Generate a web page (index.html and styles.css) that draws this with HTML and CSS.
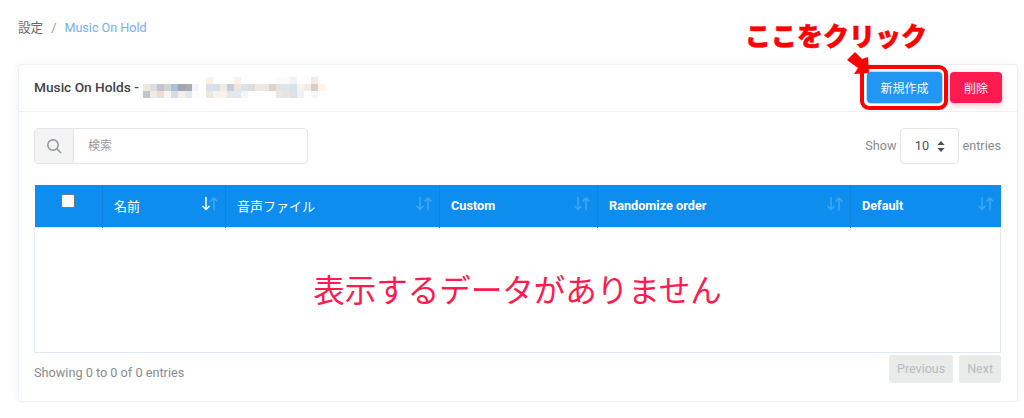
FILE: index.html
```html
<!DOCTYPE html>
<html lang="ja">
<head>
    <meta charset="UTF-8">
    <title>Music On Hold</title>
    <link rel="stylesheet" href="styles.css">
</head>
<body>

    <div class="breadcrumb">
        <span>設定</span>
        <span class="crumb-sep">/</span>
        <a class="crumb-link">Music On Hold</a>
    </div>

    <div class="card">
        <div class="card-header">
            <div class="card-title">
                Music On Holds -
                <!-- pixelated account name -->
                <svg class="blur-name" width="189" height="21" viewBox="0 0 189 21" shape-rendering="crispEdges">
                    <rect x="63" y="0" width="7" height="7" fill="#fdf0e6"/>
                    <rect x="91" y="0" width="7" height="7" fill="#fdf0e6"/>
                    <rect x="133" y="0" width="14" height="7" fill="#f8fbfd"/>
                    <rect x="147" y="0" width="7" height="7" fill="#f2f3f6"/>
                    <rect x="168" y="0" width="7" height="7" fill="#fae9e0"/>

                    <rect x="0" y="7" width="7" height="7" fill="#efe9dc"/>
                    <rect x="7" y="7" width="7" height="7" fill="#dddddf"/>
                    <rect x="14" y="7" width="7" height="7" fill="#c4c3cf"/>
                    <rect x="21" y="7" width="7" height="7" fill="#ccd6d0"/>
                    <rect x="28" y="7" width="7" height="7" fill="#a9c0da"/>
                    <rect x="35" y="7" width="7" height="7" fill="#a2a4ae"/>
                    <rect x="42" y="7" width="7" height="7" fill="#a9acb4"/>
                    <rect x="49" y="7" width="7" height="7" fill="#f3f7fc"/>
                    <rect x="63" y="7" width="7" height="7" fill="#d9e0ee"/>
                    <rect x="70" y="7" width="7" height="7" fill="#d8dde9"/>
                    <rect x="77" y="7" width="7" height="7" fill="#efece6"/>
                    <rect x="84" y="7" width="7" height="7" fill="#c9ccdc"/>
                    <rect x="91" y="7" width="7" height="7" fill="#efe5de"/>
                    <rect x="98" y="7" width="7" height="7" fill="#d6e4ef"/>
                    <rect x="105" y="7" width="7" height="7" fill="#e0dcdb"/>
                    <rect x="112" y="7" width="7" height="7" fill="#ece8e4"/>
                    <rect x="119" y="7" width="7" height="7" fill="#ece8e0"/>
                    <rect x="126" y="7" width="7" height="7" fill="#dcd3cc"/>
                    <rect x="133" y="7" width="7" height="7" fill="#e6e2e2"/>
                    <rect x="140" y="7" width="7" height="7" fill="#e4e4e6"/>
                    <rect x="147" y="7" width="7" height="7" fill="#d4e2ea"/>
                    <rect x="154" y="7" width="7" height="7" fill="#f8f2ee"/>
                    <rect x="161" y="7" width="7" height="7" fill="#f0ebe8"/>
                    <rect x="168" y="7" width="7" height="7" fill="#d9cfca"/>
                    <rect x="175" y="7" width="7" height="7" fill="#fbf3ec"/>

                    <rect x="0" y="14" width="7" height="7" fill="#c2c4c8"/>
                    <rect x="7" y="14" width="7" height="7" fill="#efece8"/>
                    <rect x="14" y="14" width="7" height="7" fill="#ecdcd4"/>
                    <rect x="21" y="14" width="7" height="7" fill="#f7f5f3"/>
                    <rect x="28" y="14" width="7" height="7" fill="#d8dbe4"/>
                    <rect x="35" y="14" width="7" height="7" fill="#f3f0eb"/>
                    <rect x="42" y="14" width="7" height="7" fill="#dfe9ef"/>
                    <rect x="49" y="14" width="7" height="7" fill="#fcfcfd"/>
                    <rect x="63" y="14" width="7" height="7" fill="#ece6e0"/>
                    <rect x="70" y="14" width="14" height="7" fill="#f7f2ea"/>
                    <rect x="84" y="14" width="14" height="7" fill="#e3e7f0"/>
                    <rect x="98" y="14" width="7" height="7" fill="#f3f7fd"/>
                    <rect x="133" y="14" width="7" height="7" fill="#ece6e4"/>
                    <rect x="140" y="14" width="7" height="7" fill="#e8e4e4"/>
                    <rect x="147" y="14" width="7" height="7" fill="#dfe0e4"/>
                    <rect x="154" y="14" width="7" height="7" fill="#f0f1f6"/>
                    <rect x="168" y="14" width="7" height="7" fill="#f5f9fc"/>
                </svg>
            </div>
            <div class="card-actions">
                <button class="btn btn-blue">新規作成</button>
                <button class="btn btn-red">削除</button>
            </div>
        </div>

        <div class="card-body">
            <div class="toolbar">
                <div class="search">
                    <span class="search-icon">
                        <svg width="16" height="16" viewBox="0 0 16 16" fill="none" stroke="#8a8f94" stroke-width="1.4">
                            <circle cx="7" cy="7" r="5.2"/>
                            <path d="M11 11l4 4"/>
                        </svg>
                    </span>
                    <span class="search-input">検索</span>
                </div>
                <div class="length">
                    Show
                    <span class="length-select">
                        10
                        <svg width="8" height="11" viewBox="0 0 8 11" fill="#495057">
                            <path d="M4 0l3.6 4H.4zM4 11L.4 7h7.2z"/>
                        </svg>
                    </span>
                    entries
                </div>
            </div>

            <table class="data-table">
                <thead>
                    <tr>
                        <th class="col-check"><span class="checkbox"></span></th>
                        <th class="col-name jp">名前
                            <svg class="sort" width="16" height="14" viewBox="0 0 16 14"><path class="on" d="M4 0V12.500M.5 9L4 12.500L7.500 9"/><path d="M12 13.500V1M8.500 4.500L12 1L15.500 4.500"/></svg>
                        </th>
                        <th class="col-file jp">音声ファイル
                            <svg class="sort" width="16" height="14" viewBox="0 0 16 14"><path d="M4 0V12.500M.5 9L4 12.500L7.500 9"/><path d="M12 13.500V1M8.500 4.500L12 1L15.500 4.500"/></svg>
                        </th>
                        <th class="col-custom">Custom
                            <svg class="sort" width="16" height="14" viewBox="0 0 16 14"><path d="M4 0V12.500M.5 9L4 12.500L7.500 9"/><path d="M12 13.500V1M8.500 4.500L12 1L15.500 4.500"/></svg>
                        </th>
                        <th class="col-random">Randomize order
                            <svg class="sort" width="16" height="14" viewBox="0 0 16 14"><path d="M4 0V12.500M.5 9L4 12.500L7.500 9"/><path d="M12 13.500V1M8.500 4.500L12 1L15.500 4.500"/></svg>
                        </th>
                        <th class="col-default">Default
                            <svg class="sort" width="16" height="14" viewBox="0 0 16 14"><path d="M4 0V12.500M.5 9L4 12.500L7.500 9"/><path d="M12 13.500V1M8.500 4.500L12 1L15.500 4.500"/></svg>
                        </th>
                    </tr>
                </thead>
                <tbody>
                    <tr>
                        <td colspan="6" class="empty">表示するデータがありません</td>
                    </tr>
                </tbody>
            </table>

            <div class="table-footer">
                <span class="info">Showing 0 to 0 of 0 entries</span>
                <div class="pager">
                    <span class="page-btn">Previous</span>
                    <span class="page-btn">Next</span>
                </div>
            </div>
        </div>
    </div>

    <!-- annotation drawn over the screenshot -->
    <div class="note-text">ここをクリック</div>
    <div class="note-box"></div>
    <svg class="note-arrow" width="24" height="24" viewBox="0 0 24 24">
        <path d="M1 9L9 1L16 8L22 6L23 22L8 23L12 17z" fill="#f00"/>
    </svg>

</body>
</html>
```

FILE: styles.css
```css
body {
    margin: 0;
    padding: 19px 6px 0 18px;
    background: #fff;
    font-family: Roboto, "Noto Sans CJK JP", sans-serif;
    font-size: 13px;
    color: #343a40;
}

.breadcrumb {
    height: 18px;
    line-height: 18px;
    font-size: 12.600px;
    color: #666;
    margin-bottom: 27px;
    display: flex;
    gap: 8px;
}

.crumb-sep {
    color: #999;
}

.crumb-link {
    color: #6fb2f5;
}

.card {
    border-radius: 4px;
    border: 1px solid #edeff2;
    box-shadow: 0 2px 8px rgba(60, 80, 110, 0.08);
}

.card-header {
    height: 46px;
    border-bottom: 1px solid #eef0f2;
    display: flex;
    align-items: center;
    justify-content: space-between;
    padding: 0 15px;
}

.card-title {
    font-size: 13.700px;
    font-weight: 500;
    color: #3f4449;
    display: flex;
    align-items: center;
    gap: 4px;
    margin-top: -2px;
}

.blur-name {
    display: block;
}

.card-actions {
    display: flex;
    gap: 8px;
    margin-top: -1px;
}

.btn {
    height: 31px;
    border: none;
    border-radius: 4px;
    color: #fff;
    font-family: inherit;
    font-size: 12px;
    padding: 0;
}

.btn-blue {
    width: 75px;
    background: #2196f3;
    box-shadow: 0 0 0 1px #b9dcf7;
}

.btn-red {
    width: 52px;
    background: #ff1a50;
    box-shadow: 0 2px 6px rgba(255, 26, 80, 0.3);
}

.card-body {
    padding: 16px 16px 18px 15px;
}

.toolbar {
    display: flex;
    justify-content: space-between;
    align-items: center;
    margin-bottom: 21px;
}

.search {
    width: 274px;
    height: 36px;
    border: 1px solid #e3e5e8;
    border-radius: 4px;
    display: flex;
    box-sizing: border-box;
}

.search-icon {
    width: 38px;
    background: #f3f3f3;
    border-right: 1px solid #e3e5e8;
    display: flex;
    align-items: center;
    justify-content: center;
}

.search-input {
    padding-left: 14px;
    line-height: 34px;
    font-size: 12px;
    color: #999;
}

.length {
    display: flex;
    align-items: center;
    gap: 3px;
    font-size: 12.700px;
    line-height: 34px;
    color: #878b90;
}

.length-select {
    width: 59px;
    height: 36px;
    margin-left: 1px;
    box-sizing: border-box;
    border: 1px solid #e3e5e8;
    border-radius: 4px;
    display: flex;
    align-items: center;
    justify-content: center;
    gap: 8px;
    color: #495057;
}

.data-table {
    width: 967px;
    height: 168px;
    border-collapse: collapse;
    table-layout: fixed;
}

.data-table th {
    position: relative;
    height: 42px;
    box-sizing: border-box;
    padding: 0 11px;
    background: #0d8eef;
    border-left: 1px solid #0b83dd;
    color: #fff;
    text-align: left;
    font-size: 12.700px;
    font-weight: 700;
}

.data-table th.jp {
    font-weight: 400;
    font-size: 13px;
}

.col-check { width: 68px; }
.col-name { width: 123px; }
.col-file { width: 214px; }
.col-custom { width: 158px; }
.col-random { width: 253px; }

.data-table .col-check {
    border-left: none;
    text-align: center;
}

.checkbox {
    display: inline-block;
    width: 12px;
    height: 12px;
    background: #fff;
    border: 1px solid #777;
    border-radius: 2px;
    position: relative;
    top: -3px;
}

/* sort arrows sit in the corner of the header cell */
.sort {
    position: absolute;
    right: 7px;
    top: 12px;
    fill: none;
    stroke: #fff;
    stroke-width: 1.500;
}

.sort path {
    opacity: 0.22;
}

.sort path.on {
    opacity: 1;
}

.empty {
    border: 1px solid #dfe7f0;
    text-align: center;
    font-size: 31.500px;
    color: #ff1a50;
    padding: 0 0 4px;
}

.table-footer {
    display: flex;
    justify-content: space-between;
    padding-top: 2px;
}

.info {
    font-size: 12.700px;
    color: #878b90;
    padding-top: 10px;
}

.pager {
    display: flex;
    gap: 6px;
}

.page-btn {
    height: 28px;
    line-height: 28px;
    padding: 0 8px;
    background: #e9eaea;
    border-radius: 3px;
    font-size: 12.500px;
    color: #b8babc;
}

.note-text {
    position: absolute;
    left: 745px;
    top: 19px;
    font-size: 26px;
    line-height: 36px;
    font-weight: 900;
    color: #f00;
    -webkit-text-stroke: 0.500px #f00;
    white-space: nowrap;
}

.note-box {
    position: absolute;
    left: 860px;
    top: 65px;
    width: 88px;
    height: 45px;
    box-sizing: border-box;
    border: 4px solid #f00;
    border-radius: 9px;
}

.note-arrow {
    position: absolute;
    left: 846px;
    top: 51px;
}
```
